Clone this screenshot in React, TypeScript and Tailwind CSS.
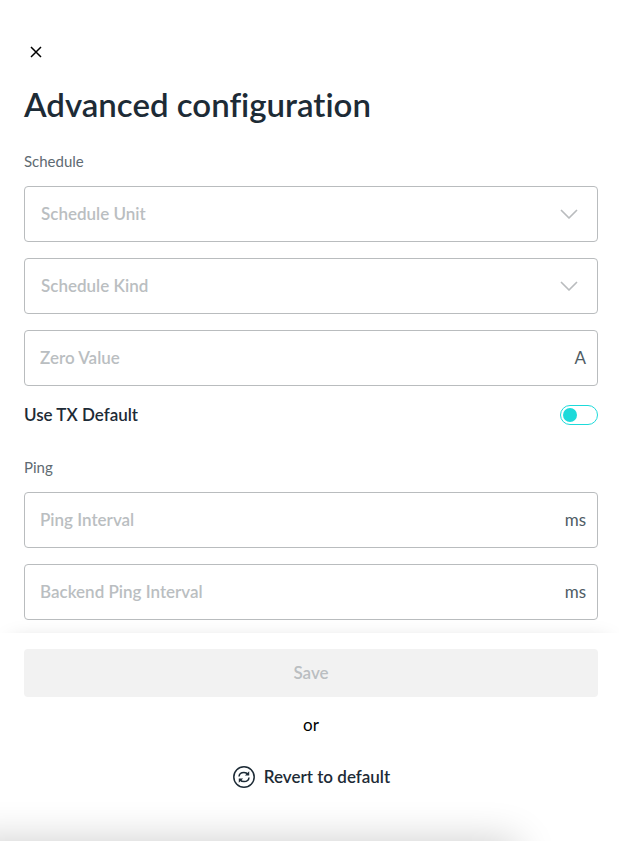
import React, { useState } from 'react';

const scheduleFields = [
    { id: "schedule-unit", label: "Schedule Unit", options: ["A", "W"] },
    { id: "schedule-kind", label: "Schedule Kind", options: ["Absolute", "Recurring", "Relative"] }
];

const pingFields = [
    { id: "ping-interval", label: "Ping Interval", unit: "ms" },
    { id: "backend-ping-interval", label: "Backend Ping Interval", unit: "ms" }
];

type SelectFieldProps = { id: string; label: string; options: string[] };

const SelectField = ({ id, label, options }: SelectFieldProps) => (
    <div className="grid items-center">
        <select
            id={id}
            aria-label={label}
            defaultValue=""
            className="col-start-1 row-start-1 h-14 w-full appearance-none rounded border border-[#b9bcbe] bg-white px-4 font-semibold text-[#babec1]"
        >
            <option value="" disabled>{label}</option>
            {options.map((option) => (
                <option key={option}>{option}</option>
            ))}
        </select>
        <svg
            className="pointer-events-none col-start-1 row-start-1 mr-5 justify-self-end"
            width="18" height="10" viewBox="0 0 18 10" fill="none"
            stroke="#b9bcbe" strokeWidth="1.7" strokeLinecap="round" strokeLinejoin="round"
        >
            <path d="M1.5 1.5 9 9 16.5 1.5" />
        </svg>
    </div>
);

type UnitFieldProps = { id: string; label: string; unit: string };

const UnitField = ({ id, label, unit }: UnitFieldProps) => (
    <div className="flex h-14 items-center rounded border border-[#b9bcbe] pr-[11px] pl-[15px]">
        <input
            id={id}
            type="text"
            aria-label={label}
            placeholder={label}
            className="min-w-0 flex-1 bg-transparent font-semibold outline-none placeholder:text-[#babec1]"
        />
        <span className="text-[#4f5c65]">{unit}</span>
    </div>
);

const App = () => {
    const [useDefault, setUseDefault] = useState(false);

    return (
        <main className="relative flex min-h-screen flex-col overflow-hidden bg-white font-['Lato',sans-serif] text-[17px] leading-6 text-[#1d2b36]">
            <div className="flex-1 pt-10 pr-[21px] pb-[13px] pl-6">
                <button type="button" aria-label="Close" className="flex h-6 w-6 items-center justify-center text-black">
                    <svg width="12" height="12" viewBox="0 0 12 12" fill="none" stroke="currentColor" strokeWidth="1.5">
                        <path d="M1 1 11 11M11 1 1 11" />
                    </svg>
                </button>
                <h1 className="mt-5 text-[33px] leading-10 font-semibold [font-variant-ligatures:none]">Advanced configuration</h1>

                {/* Schedule */}
                <h2 className="mt-[27px] text-[15px] leading-5 text-[#5e6a72]">Schedule</h2>
                <div className="mt-[15px] flex flex-col gap-4">
                    {scheduleFields.map((field) => (
                        <SelectField key={field.id} {...field} />
                    ))}
                    <UnitField id="zero-value" label="Zero Value" unit="A" />
                </div>
                <label className="mt-[17px] flex h-6 items-center justify-between font-semibold">
                    Use TX Default
                    <input
                        type="checkbox"
                        role="switch"
                        checked={useDefault}
                        onChange={(e) => setUseDefault(e.target.checked)}
                        className="flex h-5 w-[38px] appearance-none items-center rounded-full border border-[#1ddada] px-0.5 before:h-3.5 before:w-3.5 before:rounded-full before:bg-[#1ddada] checked:justify-end"
                    />
                </label>

                {/* Ping */}
                <h2 className="mt-[30px] text-[15px] leading-5 text-[#5e6a72]">Ping</h2>
                <div className="mt-[15px] flex flex-col gap-4">
                    {pingFields.map((field) => (
                        <UnitField key={field.id} {...field} />
                    ))}
                </div>
            </div>

            {/* Actions */}
            <footer className="flex flex-col items-center bg-white pt-4 pr-[21px] pb-5 pl-6 shadow-[0_-2px_20px_-12px_rgba(0,0,0,0.25)]">
                <button type="button" disabled className="h-12 w-full rounded bg-[#f2f2f2] font-semibold text-[#babec1]">
                    Save
                </button>
                <span className="mt-4 text-black">or</span>
                <button type="button" className="mt-5 flex h-16 items-start gap-2 pt-2 font-semibold">
                    <svg width="24" height="24" viewBox="0 0 24 24" fill="none" stroke="currentColor" strokeWidth="1.5">
                        <circle cx="12" cy="12" r="10.2" />
                        <path d="M7 11.5C7.2 8.8 9.3 7.4 12 7.4C13.6 7.4 15 8 16 9.3" />
                        <path d="M17 12.5C16.8 15.2 14.7 16.6 12 16.6C10.4 16.6 9 16 8 14.7" />
                        <path d="M17.2 6.3V10.6H12.9ZM6.8 17.7V13.4H11.1Z" fill="currentColor" stroke="none" />
                    </svg>
                    Revert to default
                </button>
            </footer>

            {/* Shade along the bottom edge */}
            <div className="pointer-events-none absolute top-full -left-10 h-24 w-[90%] shadow-[0_0_40px_rgba(0,0,0,0.2)]"></div>
        </main>
    );
};

export default App;
